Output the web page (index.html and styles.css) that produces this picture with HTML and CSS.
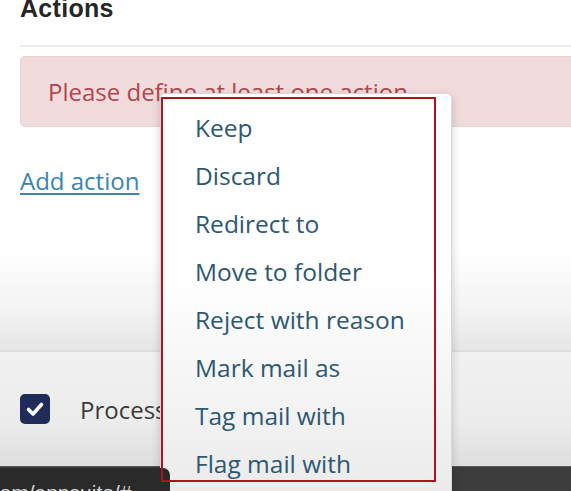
FILE: index.html
```html
<!DOCTYPE html>
<html lang="en">
<head>
<meta charset="utf-8">
<title>Actions</title>
<link rel="stylesheet" href="styles.css">
</head>
<body>
<div class="page">
  <section class="content">
    <h2 class="title">Actions</h2>
    <hr class="rule">
    <div class="alert">Please define at least one action</div>
    <a class="add-link" href="#">Add action</a>
  </section>
  <footer class="footer">
    <span class="checkbox">
      <svg viewBox="0 0 30 30" width="30" height="30" aria-hidden="true">
        <path d="M8.5 15.5 L13 20 L21.5 10.5" fill="none" stroke="#fff" stroke-width="3.6" stroke-linecap="round" stroke-linejoin="round"/>
      </svg>
    </span>
    <span class="footer-label">Process subsequent rules</span>
  </footer>
  <div class="taskbar"></div>
</div>

<ul class="menu">
  <li class="menu-item">Keep</li>
  <li class="menu-item">Discard</li>
  <li class="menu-item">Redirect to</li>
  <li class="menu-item">Move to folder</li>
  <li class="menu-item">Reject with reason</li>
  <li class="menu-item">Mark mail as</li>
  <li class="menu-item">Tag mail with</li>
  <li class="menu-item">Flag mail with</li>
</ul>

<div class="status"><span class="status-text">com/appsuite/#</span></div>
<div class="highlight"></div>
</body>
</html>
```

FILE: styles.css
```css
* { box-sizing: border-box; }

html, body {
  margin: 0;
  padding: 0;
  width: 571px;
  height: 491px;
  overflow: hidden;
  background: #ffffff;
  font-family: "Open Sans", "Liberation Sans", sans-serif;
}

.page {
  display: flex;
  flex-direction: column;
  height: 491px;
}

.content {
  height: 350px;
  padding: 0 0 0 20px;
  display: flex;
  flex-direction: column;
  align-items: flex-start;
  background: linear-gradient(to bottom, #ffffff 0px, #ffffff 250px, #f3f3f3 310px, #e6e6e6 350px);
}

.title {
  margin: -4px 0 0;
  font-family: "Liberation Sans", Arial, sans-serif;
  font-weight: bold;
  font-size: 25px;
  line-height: 25px;
  letter-spacing: 0.3px;
  color: #262626;
}

.rule {
  align-self: stretch;
  margin: 24px 0 0;
  border: 0;
  height: 2px;
  background: #ebebeb;
}

.alert {
  align-self: stretch;
  margin: 9px 0 0;
  height: 71px;
  padding-left: 27px;
  line-height: 69px;
  font-size: 24px;
  color: #b0474c;
  background: #f2dbdc;
  border: 1px solid #ead0d1;
  border-right: 0;
  border-radius: 5px 0 0 5px;
  white-space: nowrap;
}

.add-link {
  margin-top: 40px;
  font-size: 24px;
  line-height: 28px;
  color: #3a84b4;
  text-decoration: underline;
  text-underline-offset: 3px;
  text-decoration-thickness: 1.5px;
}

.footer {
  height: 116px;
  border-top: 2px solid #dcdcdc;
  padding-left: 20px;
  display: flex;
  align-items: center;
  gap: 30px;
  background: linear-gradient(to bottom, #f1f1f1 0%, #ececec 60%, #dedede 100%);
}

.checkbox {
  width: 30px;
  height: 30px;
  border-radius: 5px;
  background: #1f2c5a;
  display: flex;
}

.footer-label {
  font-size: 24px;
  color: #3b3b3b;
  white-space: nowrap;
}

.taskbar {
  flex: 1;
  background: #3c3c3c;
  border-top: 1px solid #555;
}

.menu {
  position: absolute;
  left: 160px;
  top: 93px;
  width: 292px;
  height: 410px;
  margin: 0;
  padding: 10px 0 0 34px;
  list-style: none;
  background: linear-gradient(to bottom, #ffffff 0px, #ffffff 180px, #f4f4f4 300px, #ebebeb 400px);
  border: 1px solid #d8d8d8;
  border-radius: 5px;
  box-shadow: 0 3px 10px rgba(0, 0, 0, 0.18);
}

.menu-item {
  font-size: 24.5px;
  font-weight: 500;
  line-height: 48px;
  color: #2c5873;
  white-space: nowrap;
}

.status {
  position: absolute;
  left: 0;
  top: 468px;
  width: 170px;
  height: 30px;
  background: #2a2a2a;
  border-top-right-radius: 7px;
  overflow: hidden;
  padding-top: 14px;
}

.status-text {
  display: block;
  margin-left: -11px;
  font-family: "Liberation Sans", Arial, sans-serif;
  font-size: 21px;
  line-height: 21px;
  color: #d6d6d6;
  white-space: nowrap;
}

.highlight {
  position: absolute;
  left: 161px;
  top: 97px;
  width: 275px;
  height: 385px;
  border: 2px solid #b1121c;
}
```
